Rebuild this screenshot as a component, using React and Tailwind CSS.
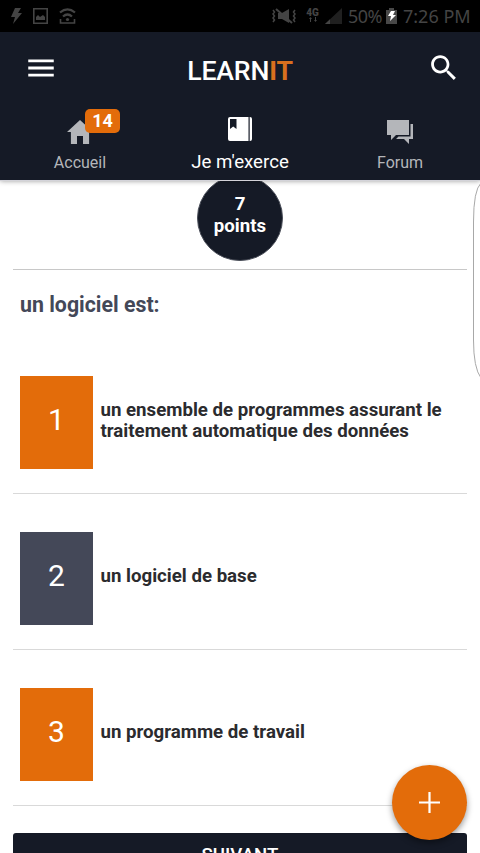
import React from 'react';
import { IoMdHome, IoMdMenu, IoMdSearch } from 'react-icons/io';

const answers = [
  { id: 1, text: 'un ensemble de programmes assurant le traitement automatique des données' },
  { id: 2, text: 'un logiciel de base', selected: true },
  { id: 3, text: 'un programme de travail' },
];

function StatusBar() {
  return (
    <div className="h-8 bg-black text-[#444444] flex items-center justify-between pl-[11px] pr-[10px]">
      <div className="flex items-center gap-[11px]">
        <svg width="11" height="16" viewBox="0 0 11 16" fill="currentColor">
          <path d="M4 0h6L7 5h4L2 16l2-7H0z" />
        </svg>
        <svg width="15" height="16" viewBox="0 0 15 16" fill="none" stroke="currentColor" strokeWidth="1.6">
          <path d="M.8.8h13.4v14.4H.8z" />
          <path d="M3 12V9l2-2 2 2 3-2 2 2v3z" fill="currentColor" stroke="none" />
        </svg>
        <svg width="17" height="16" viewBox="0 0 17 16" fill="none" stroke="currentColor" strokeWidth="2.2">
          <path d="M1 4.5Q8.500-1.800 16 4.500M4 8.500Q8.500 4.500 13 8.500" />
          <path d="M1.500 11v4h14v-4" strokeWidth="1.6" />
          <circle cx="8.500" cy="11.500" r="1.600" fill="currentColor" stroke="none" />
        </svg>
      </div>
      <div className="flex items-center">
        <svg width="24" height="16" viewBox="0 0 24 16" fill="none" stroke="currentColor" strokeWidth="1.500" className="mr-[10px]">
          <path d="M1 2l1.500 2L1 6l1.500 2L1 10l1.500 2L1 14M23 2l-1.500 2L23 6l-1.500 2 1.500 2-1.500 2 1.500 2" />
          <path d="M6 5h4l7-4v14l-7-4H6z" fill="currentColor" stroke="none" />
          <path d="M4 1l16 14" strokeWidth="2" />
        </svg>
        <div className="w-[13px] h-4 mr-[6px] flex flex-col items-center">
          <span className="text-[10px] leading-[9px] font-black font-['Roboto',sans-serif]">4G</span>
          <svg width="8" height="5" viewBox="0 0 8 5" fill="currentColor">
            <path d="M0 2l1.500-2L3 2H2v3H1V2zM5 3l1.500 2L8 3H7V0H6v3z" />
          </svg>
        </div>
        <svg width="17" height="16" viewBox="0 0 17 16" className="mr-[6px]">
          <path d="M0 16L17 0v16z" fill="#202020" />
          <path d="M0 16l5-4.700V16z" fill="#444444" />
        </svg>
        <span className="w-[34px] mr-1 text-[18px] leading-8 tracking-[-0.600px] whitespace-nowrap font-['Noto_Sans',sans-serif]">50%</span>
        <svg width="11" height="16" viewBox="0 0 11 16" className="mr-[6px]">
          <path d="M3 0h5v2h3v14H0V2h3z" fill="#484848" />
          <path d="M5 3h4L7 7h3l-6 6 1-5H2z" fill="#fff" />
        </svg>
        <span className="w-[67px] text-[18px] leading-8 whitespace-nowrap font-['Noto_Sans',sans-serif]">7:26 PM</span>
      </div>
    </div>
  );
}

function BookIcon() {
  return (
    <svg width="24" height="24" viewBox="0 0 24 24" fill="currentColor">
      <path fillRule="evenodd" d="M2 0h18.500v24H2a2 2 0 0 1-2-2V2a2 2 0 0 1 2-2zM2 2v10l3.200-2.500L8.500 12V2z" />
      <path d="M21.700 0h.3a2 2 0 0 1 2 2v20a2 2 0 0 1-2 2h-.3z" />
    </svg>
  );
}

function ForumIcon() {
  return (
    <svg width="26" height="24" viewBox="0 0 26 24" fill="currentColor">
      <path d="M0 0h22v15H9l-5 5v-5H0z" />
      <path d="M23.500 4H26v15h-4v5l-5-5H9l2.500-2.500h12z" />
    </svg>
  );
}

function Header() {
  return (
    <header className="relative z-10 h-[148px] bg-[#151a26] shadow-[0_1px_0_#d3d3d9,0_1px_5px_rgba(0,0,0,0.4)]">
      <div className="h-[72px] flex items-center justify-between pl-6 pr-5 text-white">
        <button className="w-[34px] pb-px"><IoMdMenu size={34} /></button>
        <h1 className="pt-[5px] pr-[5px] text-[26.67px] leading-8 font-medium tracking-[-0.15px]">
          LEARN<span className="text-[#d9701e] font-bold">IT</span>
        </h1>
        <button className="w-[33px] pb-px"><IoMdSearch size={33} /></button>
      </div>
      <nav className="h-[76px] grid grid-cols-3 text-[#b4b6ba]">
        <div className="relative flex flex-col items-center pt-3">
          <IoMdHome size={32} />
          <span className="absolute left-[85px] top-[5px] w-[35px] h-6 rounded-[5px] bg-[#e36c0a] text-white text-[18px] leading-6 font-bold text-center">14</span>
          <span className="mt-[5px] text-[16px] leading-5">Accueil</span>
        </div>
        <div className="flex flex-col items-center pt-[13px] text-white">
          <BookIcon />
          <span className="mt-[11px] text-[18.67px] leading-5">Je m'exerce</span>
        </div>
        <div className="flex flex-col items-center pt-4">
          <ForumIcon />
          <span className="mt-[9px] text-[16px] leading-5">Forum</span>
        </div>
      </nav>
    </header>
  );
}

function Answer({ id, text, selected }) {
  return (
    <li className="h-[156px] border-b border-[#d9d9d9] pl-[7px] pt-[38px] flex items-start">
      <div className={`w-[73px] h-[93px] shrink-0 flex items-center justify-center text-white text-[30px] pb-[7px] ${selected ? 'bg-[#444858]' : 'bg-[#e36c0a]'}`}>
        {id}
      </div>
      <div className="h-[90px] ml-[7.500px] w-[358px] flex items-center text-[18.67px] leading-[21.33px] font-bold text-[#2b2b2e]">
        {text}
      </div>
    </li>
  );
}

export default function App() {
  return (
    <div className="relative w-[480px] h-[853px] overflow-hidden bg-white font-['Roboto',sans-serif]">
      <StatusBar />
      <Header />

      <main className="px-[13px]">
        <div className="h-[90px] border-b border-[#c8c8c8] flex justify-center">
          <div className="-mt-[5px] w-[86px] h-[86px] rounded-full bg-[#151a26] border border-[#4a4e59] text-white text-center text-[18.67px] leading-[22px] font-bold pt-[17px]">
            7<br />points
          </div>
        </div>
        <h2 className="h-[68px] pl-[7px] pt-[22px] text-[21.33px] leading-[26px] font-bold text-[#444858]">
          un logiciel est:
        </h2>
        <ul>
          {answers.map((answer) => (
            <Answer key={answer.id} {...answer} />
          ))}
        </ul>
        <button className="block mt-[27px] w-full h-11 rounded-[3px] bg-[#151a26] text-white text-[18.67px] font-medium">
          SUIVANT
        </button>
      </main>

      {/* Edge panel handle, runs past the right side of the screen */}
      <svg className="absolute right-0 top-[182px] z-0" width="7" height="198" viewBox="0 0 7 198" fill="none" stroke="#a8a8a8">
        <path d="M8 1Q.5 8 .5 40v118q0 28 7.500 38" />
      </svg>

      <button className="absolute z-10 left-[392px] top-[765px] w-[75px] h-[75px] rounded-full bg-[#e36c0a] flex items-center justify-center shadow-[0_3px_6px_rgba(0,0,0,0.4)]">
        <svg width="21" height="21" viewBox="0 0 21 21" stroke="#fff" strokeWidth="2.200">
          <path d="M10.500 0v21M0 10.500h21" />
        </svg>
      </button>
    </div>
  );
}
